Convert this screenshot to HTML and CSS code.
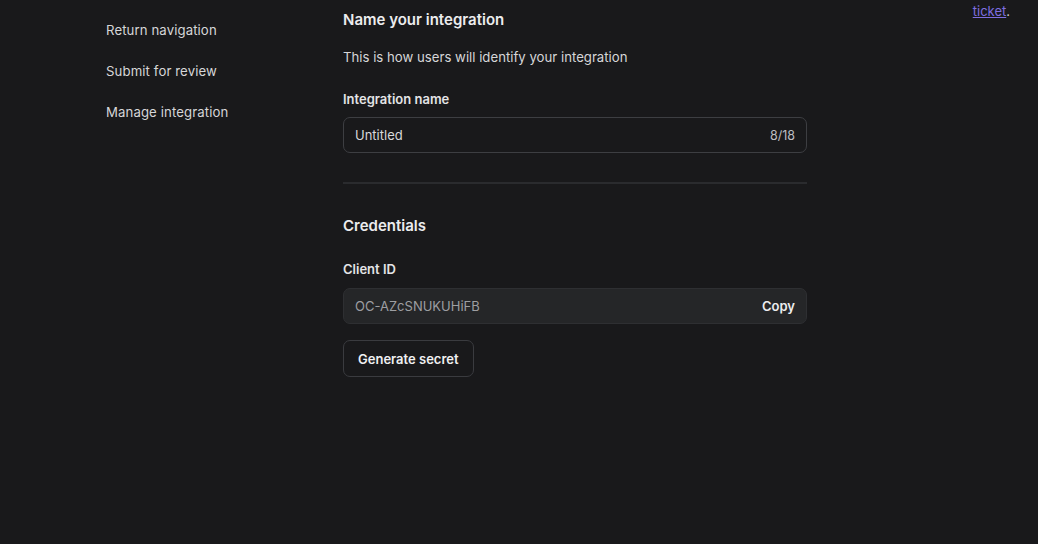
FILE: index.html
```html
<!DOCTYPE html>
<html>
<head>
<meta charset="utf-8">
<link rel="stylesheet" href="styles.css">
</head>
<body>
<div class="page">
  <nav class="sidebar">
    <a class="nav-link">Return navigation</a>
    <a class="nav-link">Submit for review</a>
    <a class="nav-link">Manage integration</a>
  </nav>
  <main class="main">
    <section class="section">
      <h2 class="heading">Name your integration</h2>
      <p class="desc">This is how users will identify your integration</p>
      <label class="label">Integration name</label>
      <div class="input">
        <span class="input-value">Untitled</span>
        <span class="counter">8/18</span>
      </div>
    </section>
    <hr class="divider">
    <section class="section">
      <h2 class="heading creds">Credentials</h2>
      <label class="label">Client ID</label>
      <div class="input readonly">
        <span class="input-value muted">OC-AZcSNUKUHiFB</span>
        <span class="copy">Copy</span>
      </div>
      <button class="btn">Generate secret</button>
    </section>
  </main>
  <aside class="aside"><a class="link">ticket</a>.</aside>
</div>
</body>
</html>
```

FILE: styles.css
```css
html, body {
  margin: 0;
  padding: 0;
  background: #19191b;
  color: #e4e4e6;
  font-family: "Inter", "Open Sans", sans-serif;
  height: 100%;
}
.page {
  display: flex;
  height: 544px;
}
.sidebar {
  width: 343px;
  padding-left: 106px;
  padding-top: 21px;
  display: flex;
  flex-direction: column;
  align-items: flex-start;
  gap: 22px;
  box-sizing: border-box;
  flex-shrink: 0;
}
.nav-link {
  font-size: 13.2px;
  line-height: 19px;
  color: #d6d6d8;
  letter-spacing: 0.1px;
}
.main {
  width: 464px;
  padding-top: 10px;
  flex-shrink: 0;
}
.section {
  display: flex;
  flex-direction: column;
  align-items: flex-start;
}
.heading {
  margin: 0;
  font-size: 15px;
  line-height: 20px;
  font-weight: 600;
  color: #ececee;
}
.desc {
  margin: 17px 0 0;
  font-size: 13.2px;
  line-height: 20px;
  color: #d6d6d8;
}
.label {
  margin-top: 23px;
  font-size: 13px;
  line-height: 18px;
  font-weight: 600;
  color: #e4e4e6;
}
.input {
  margin-top: 9px;
  align-self: stretch;
  height: 36px;
  box-sizing: border-box;
  border: 1px solid #3d3e42;
  border-radius: 7px;
  display: flex;
  align-items: center;
  justify-content: space-between;
  padding: 0 11px;
  font-size: 13px;
}
.input-value { color: #d8d8da; }
.muted { color: #9d9ea2; }
.counter { color: #bdbec2; font-size: 12.5px; }
.readonly {
  background: #252628;
  border-color: #2e2f32;
  margin-top: 10px;
}
.copy {
  font-weight: 600;
  color: #ececee;
  font-size: 13px;
}
.divider {
  margin: 29px 0 0;
  border: 0;
  border-top: 2px solid #2a2b2e;
}
.creds { margin-top: 32px; }
.creds + .label { margin-top: 24px; }
.btn {
  margin-top: 16px;
  height: 37px;
  padding: 0 14px;
  background: #19191b;
  border: 1px solid #3a3b3f;
  border-radius: 7px;
  color: #f0f0f2;
  font-family: inherit;
  font-size: 13px;
  font-weight: 600;
}
.aside {
  flex: 1;
  text-align: right;
  padding-right: 28px;
  padding-top: 3px;
  font-size: 13px;
  color: #c8c8ca;
}
.link {
  color: #7f6ee0;
  text-decoration: underline;
}
```
